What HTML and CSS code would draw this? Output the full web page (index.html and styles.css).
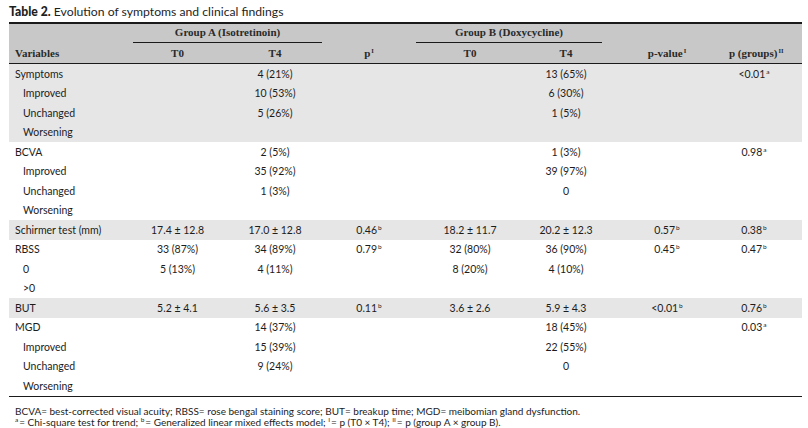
FILE: index.html
```html
<!DOCTYPE html>
<html>
<head>
<meta charset="utf-8">
<link rel="stylesheet" href="styles.css">
</head>
<body>
<div class="page">
  <div class="title"><b>Table 2.</b> Evolution of symptoms and clinical findings</div>
  <table class="tbl">
    <colgroup>
      <col class="c-var"><col class="c-t0a"><col class="c-t4a"><col class="c-pa"><col class="c-t0b"><col class="c-t4b"><col class="c-pv"><col class="c-pg">
    </colgroup>
    <thead>
      <tr class="h1">
        <th></th>
        <th colspan="2"><div class="grp">Group A (Isotretinoin)</div></th>
        <th></th>
        <th colspan="2"><div class="grp">Group B (Doxycycline)</div></th>
        <th></th>
        <th></th>
      </tr>
      <tr class="h2">
        <th class="left">Variables</th>
        <th>T0</th>
        <th>T4</th>
        <th>p<sup>I</sup></th>
        <th>T0</th>
        <th>T4</th>
        <th>p-value<sup>I</sup></th>
        <th class="pg">p (groups)<sup>II</sup></th>
      </tr>
    </thead>
    <tbody>
      <tr class="g"><td class="v">Symptoms</td><td></td><td>4 (21%)</td><td></td><td></td><td>13 (65%)</td><td></td><td class="pg">&lt;0.01<sup>a</sup></td></tr>
      <tr class="g"><td class="v sub">Improved</td><td></td><td>10 (53%)</td><td></td><td></td><td>6 (30%)</td><td></td><td class="pg"></td></tr>
      <tr class="g"><td class="v sub">Unchanged</td><td></td><td>5 (26%)</td><td></td><td></td><td>1 (5%)</td><td></td><td class="pg"></td></tr>
      <tr class="g"><td class="v sub">Worsening</td><td></td><td></td><td></td><td></td><td></td><td></td><td class="pg"></td></tr>

      <tr><td class="v">BCVA</td><td></td><td>2 (5%)</td><td></td><td></td><td>1 (3%)</td><td></td><td class="pg">0.98<sup>a</sup></td></tr>
      <tr><td class="v sub">Improved</td><td></td><td>35 (92%)</td><td></td><td></td><td>39 (97%)</td><td></td><td class="pg"></td></tr>
      <tr><td class="v sub">Unchanged</td><td></td><td>1 (3%)</td><td></td><td></td><td>0</td><td></td><td class="pg"></td></tr>
      <tr><td class="v sub">Worsening</td><td></td><td></td><td></td><td></td><td></td><td></td><td class="pg"></td></tr>

      <tr class="g"><td class="v">Schirmer test (mm)</td><td>17.4 ± 12.8</td><td>17.0 ± 12.8</td><td>0.46<sup>b</sup></td><td>18.2 ± 11.7</td><td>20.2 ± 12.3</td><td>0.57<sup>b</sup></td><td class="pg">0.38<sup>b</sup></td></tr>

      <tr><td class="v">RBSS</td><td>33 (87%)</td><td>34 (89%)</td><td>0.79<sup>b</sup></td><td>32 (80%)</td><td>36 (90%)</td><td>0.45<sup>b</sup></td><td class="pg">0.47<sup>b</sup></td></tr>
      <tr><td class="v sub">0</td><td>5 (13%)</td><td>4 (11%)</td><td></td><td>8 (20%)</td><td>4 (10%)</td><td></td><td class="pg"></td></tr>
      <tr><td class="v sub">&gt;0</td><td></td><td></td><td></td><td></td><td></td><td></td><td class="pg"></td></tr>

      <tr class="g"><td class="v">BUT</td><td>5.2 ± 4.1</td><td>5.6 ± 3.5</td><td>0.11<sup>b</sup></td><td>3.6 ± 2.6</td><td>5.9 ± 4.3</td><td>&lt;0.01<sup>b</sup></td><td class="pg">0.76<sup>b</sup></td></tr>

      <tr><td class="v">MGD</td><td></td><td>14 (37%)</td><td></td><td></td><td>18 (45%)</td><td></td><td class="pg">0.03<sup>a</sup></td></tr>
      <tr><td class="v sub">Improved</td><td></td><td>15 (39%)</td><td></td><td></td><td>22 (55%)</td><td></td><td class="pg"></td></tr>
      <tr><td class="v sub">Unchanged</td><td></td><td>9 (24%)</td><td></td><td></td><td>0</td><td></td><td class="pg"></td></tr>
      <tr class="last"><td class="v sub">Worsening</td><td></td><td></td><td></td><td></td><td></td><td></td><td class="pg"></td></tr>
    </tbody>
  </table>
  <div class="notes">
    <div>BCVA= best-corrected visual acuity; RBSS= rose bengal staining score; BUT= breakup time; MGD= meibomian gland dysfunction.</div>
    <div><sup>a</sup>= Chi-square test for trend; <sup>b</sup>= Generalized linear mixed effects model; <sup>I</sup>= p (T0 × T4); <sup>II</sup>= p (group A × group B).</div>
  </div>
</div>
</body>
</html>
```

FILE: styles.css
```css
html, body {
  margin: 0;
  padding: 0;
  background: #ffffff;
}

.page {
  padding-left: 9px;
  width: 793px;
  color: #1c1c1c;
  font-family: Lato, "Open Sans", sans-serif;
}

.title {
  height: 22px;
  line-height: 24px;
  font-size: 12.2px;
  color: #1e1e1e;
  white-space: nowrap;
}

.title b {
  font-weight: 900;
}

.tbl {
  width: 793px;
  border-collapse: collapse;
  table-layout: fixed;
  font-size: 10.5px;
}

.c-var { width: 121px; }
.c-t0a { width: 95px; }
.c-t4a { width: 100px; }
.c-pa { width: 88px; }
.c-t0b { width: 114px; }
.c-t4b { width: 78px; }
.c-pv { width: 124px; }
.c-pg { width: 73px; }

.tbl thead {
  background: #c8c8c8;
  font-family: "Liberation Serif", serif;
  font-weight: bold;
  font-size: 11px;
  color: #2a2a2a;
}

.tbl thead tr.h1 {
  border-top: 2px solid #1a1a1a;
}

.tbl thead tr.h2 {
  border-bottom: 1.5px solid #1a1a1a;
}

.tbl th {
  padding: 0;
  font-weight: bold;
  text-align: center;
  white-space: nowrap;
}

.h1 th {
  height: 19px;
  vertical-align: bottom;
}

.h2 th {
  height: 20px;
  vertical-align: middle;
}

.grp {
  margin: 0 3px 0 3px;
  padding-bottom: 2px;
  border-bottom: 1px solid #1a1a1a;
  line-height: 16px;
}

.tbl th.left {
  text-align: left;
  padding-left: 6px;
}

.tbl td {
  height: 19.5px;
  padding: 0;
  text-align: center;
  vertical-align: middle;
  white-space: nowrap;
}

.tbl td.v {
  text-align: left;
  padding-left: 6px;
}

.tbl td.sub {
  padding-left: 14px;
}

.tbl .pg {
  padding-right: 23px;
}

.tbl tr.g td {
  background: #e6e6e6;
}

.tbl tr.last {
  border-bottom: 1.5px solid #1a1a1a;
}

sup {
  font-size: 6.5px;
  vertical-align: 4px;
  line-height: 0;
  margin-left: 1px;
}

.notes {
  padding-top: 9px;
  padding-left: 6px;
  font-size: 10px;
  line-height: 11.5px;
  color: #1c1c1c;
  white-space: nowrap;
}

.notes sup {
  margin-left: 0;
  margin-right: 1px;
}
```
